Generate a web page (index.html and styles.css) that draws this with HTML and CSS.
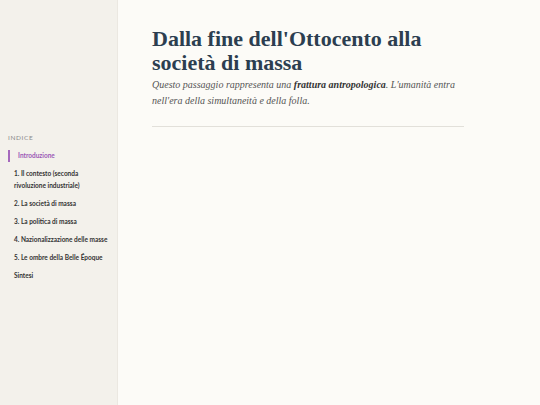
FILE: index.html
```html
<!DOCTYPE html>
<html lang="it">
<head>
<meta charset="utf-8">
<title>Dalla fine dell'Ottocento alla società di massa</title>
<link rel="stylesheet" href="styles.css">
</head>
<body>
<div class="layout">
  <aside class="sidebar">
    <div class="toc-title">INDICE</div>
    <ul class="toc">
      <li class="toc-item active">Introduzione</li>
      <li class="toc-item">1. Il contesto (seconda rivoluzione industriale)</li>
      <li class="toc-item">2. La società di massa</li>
      <li class="toc-item">3. La politica di massa</li>
      <li class="toc-item">4. Nazionalizzazione delle masse</li>
      <li class="toc-item">5. Le ombre della Belle Époque</li>
      <li class="toc-item">Sintesi</li>
    </ul>
  </aside>
  <main class="main">
    <div class="content">
      <h1 class="title">Dalla fine dell'Ottocento alla società di massa</h1>
      <p class="lead">Questo passaggio rappresenta una <strong>frattura antropologica</strong>. L'umanità entra nell'era della simultaneità e della folla.</p>
      <hr class="divider">
    </div>
  </main>
</div>
</body>
</html>
```

FILE: styles.css
```css
html, body {
  margin: 0;
  padding: 0;
  height: 100%;
}
body {
  background: #fcfbf7;
  font-family: Lato, "Liberation Sans", sans-serif;
}
.layout {
  display: flex;
  height: 405px;
}
.sidebar {
  width: 118px;
  flex: 0 0 118px;
  background: #f3f1eb;
  border-right: 1px solid #ebe8e1;
  box-sizing: border-box;
  padding: 134px 8px 0 8px;
}
.toc-title {
  font-size: 6.5px;
  letter-spacing: 0.6px;
  color: #8a8a8a;
  margin-bottom: 9px;
}
.toc {
  list-style: none;
  margin: 0;
  padding: 0;
}
.toc-item {
  font-size: 6.5px;
  font-weight: 700;
  color: #333;
  line-height: 12px;
  padding-left: 6px;
  margin-bottom: 6px;
}
.toc-item.active {
  color: #9b59b6;
  border-left: 2px solid #a569bd;
  padding-left: 8px;
  margin-left: 0;
}
.main {
  flex: 1;
  padding: 27px 0 0 34px;
}
.content {
  width: 312px;
}
.title {
  font-family: "Liberation Serif", serif;
  font-weight: 700;
  font-size: 22px;
  line-height: 24px;
  color: #2c3e50;
  margin: 0 0 2px 0;
}
.lead {
  font-family: "Liberation Serif", serif;
  font-style: italic;
  font-size: 10px;
  line-height: 16px;
  color: #555;
  margin: 0;
}
.lead strong {
  color: #333;
  font-weight: 700;
}
.divider {
  border: 0;
  border-top: 1px solid #e2e0da;
  margin: 17px 0 0 0;
}
```
